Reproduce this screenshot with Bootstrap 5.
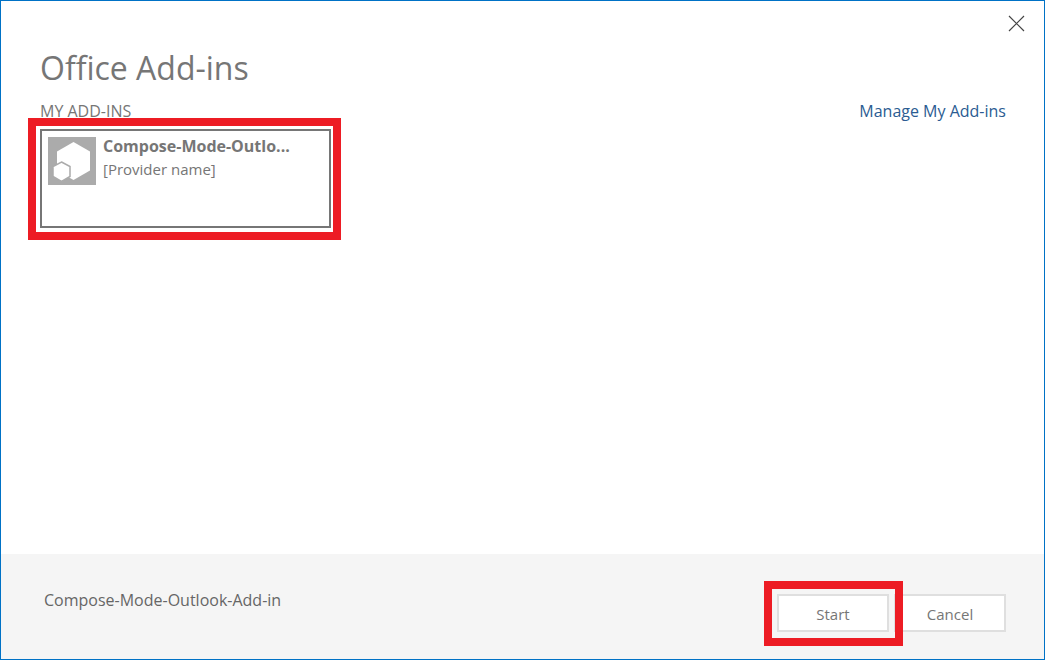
<!DOCTYPE html>
<html lang="en">
<head>
<meta charset="utf-8">
<meta name="viewport" content="width=device-width, initial-scale=1">
<title>Office Add-ins</title>
<link href="https://cdn.jsdelivr.net/npm/bootstrap@5.3.0/dist/css/bootstrap.min.css" rel="stylesheet">
<style>
  body { font-family: "Open Sans", "Noto Sans", sans-serif; font-size: 16px; line-height: 24px; color: #767676; background: #fff; }
  .dialog-frame { padding: 0 2px 3px 0; }
  .dialog { border: 1px solid #0072c6; }
  .dialog-body { padding: 47px 38px 0 39px; }
  .dialog-title { font-size: 32px; line-height: 40px; font-weight: 400; }
  .close-btn { top: 14px; right: 19px; line-height: 0; color: #444; }
  .section-title { font-size: 16px; line-height: 24px; font-weight: 400; }
  .section-head { padding: 3px 0 6px; }
  .manage-link { color: #2b5c92; }
  .addin { width: 291px; height: 99px; padding: 6px; border: 2px solid #767676; color: inherit; background: #fff; font-size: 15px; line-height: 23px; }
  .addin-icon { margin-right: 7px; }
  .addin-text { margin-top: -2px; }
  .addin-name { font-size: 16px; }
  .dialog-footer { background: #f5f5f5; padding: 34px 38px 27px 43px; color: #666; }
  .footer-actions { gap: 5px; padding-top: 6px; }
  .action-btn { width: 112px; height: 38px; padding: 2px 0 0; border: 2px solid #dfdfdf; border-radius: 0; background: #fff; color: #767676; font-size: 15px; }
  /* red callout frames drawn over the highlighted controls */
  .callout::after { content: ""; position: absolute; z-index: 2; border: 8px solid #ed1c24; pointer-events: none; }
  .callout-addin::after { inset: -11px -10px -12px -12px; }
  .callout-start::after { inset: -13px -14px -14px -13px; }
</style>
</head>
<body>
<div class="dialog-frame vh-100">
  <main class="dialog position-relative d-flex flex-column h-100">
    <button type="button" class="close-btn btn border-0 p-0 position-absolute" aria-label="Close">
      <svg width="17" height="17" viewBox="0 0 17 17" fill="none" stroke="currentColor" stroke-width="1.2"><path d="M1 1l15 15M16 1L1 16"/></svg>
    </button>
    <div class="dialog-body flex-grow-1">
      <h1 class="dialog-title mb-2">Office Add-ins</h1>
      <div class="section-head d-flex justify-content-between">
        <h2 class="section-title mb-0">MY ADD-INS</h2>
        <a href="#" class="manage-link text-decoration-none">Manage My Add-ins</a>
      </div>
      <div class="callout callout-addin position-relative d-inline-block">
        <button type="button" class="addin d-flex align-items-start text-start">
          <svg class="addin-icon flex-shrink-0" width="48" height="48" viewBox="0 0 48 48">
            <rect width="48" height="48" fill="#ababab"/>
            <path d="M25.500 5L42 14.500v19L25.500 43 9 33.500v-19z" fill="#fff"/>
            <path d="M13.500 25l8.500 4.500v10L13.500 44.500 5 39.500v-10z" fill="#fff" stroke="#ababab" stroke-width="1.500"/>
          </svg>
          <span class="addin-text"><strong class="addin-name d-block">Compose-Mode-Outlo...</strong>[Provider name]</span>
        </button>
      </div>
    </div>
    <footer class="dialog-footer d-flex justify-content-between align-items-start">
      <span>Compose-Mode-Outlook-Add-in</span>
      <div class="footer-actions d-flex">
        <div class="callout callout-start position-relative"><button type="button" class="action-btn btn d-block">Start</button></div>
        <button type="button" class="action-btn btn">Cancel</button>
      </div>
    </footer>
  </main>
</div>
<script src="https://cdn.jsdelivr.net/npm/bootstrap@5.3.0/dist/js/bootstrap.bundle.min.js"></script>
</body>
</html>
